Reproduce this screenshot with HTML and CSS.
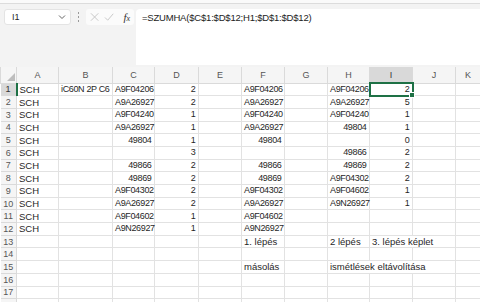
FILE: index.html
```html
<!DOCTYPE html>
<html lang="hu">
<head>
    <meta charset="UTF-8">
    <meta name="viewport" content="width=device-width, initial-scale=1.0">
    <title>Munkafüzet</title>
    <link rel="stylesheet" href="styles.css">
</head>
<body>
    <div class="ribbon-edge"></div>
    <div class="formula-bar">
        <div class="name-box">
            <span>I1</span>
            <svg width="8" height="6" viewBox="0 0 8 6"><path d="M1 1.5 L4 4.5 L7 1.5" fill="none" stroke="#666" stroke-width="1"/></svg>
        </div>
        <div class="grip"><i></i><i></i><i></i></div>
        <div class="fx-buttons">
            <svg width="10" height="10" viewBox="0 0 10 10"><path d="M1 1 L9 9 M9 1 L1 9" stroke="#c4c4c4" stroke-width="1"/></svg>
            <svg width="11" height="10" viewBox="0 0 11 10"><path d="M1 5.5 L4 8.5 L10 1.5" fill="none" stroke="#c4c4c4" stroke-width="1"/></svg>
            <span class="fx">f<small>x</small></span>
        </div>
        <div class="formula-input">=SZUMHA($C$1:$D$12;H1;$D$1:$D$12)</div>
    </div>

    <table class="sheet" id="sheet">
        <colgroup>
            <col style="width:16px"><col style="width:42px"><col style="width:54px"><col style="width:42px">
            <col style="width:44px"><col style="width:43px"><col style="width:43px"><col style="width:43px">
            <col style="width:42px"><col style="width:43px"><col style="width:43px"><col style="width:25px">
        </colgroup>
    </table>

    <script>
        const columns = ['A', 'B', 'C', 'D', 'E', 'F', 'G', 'H', 'I', 'J', 'K'];

        // egy sor = A..K oszlopok, szám jobbra, szöveg balra igazítva
        const rows = [
            ['SCH', 'iC60N 2P C6', 'A9F04206', 2, '', 'A9F04206', '', 'A9F04206', 2],
            ['SCH', '', 'A9A26927', 2, '', 'A9A26927', '', 'A9A26927', 5],
            ['SCH', '', 'A9F04240', 1, '', 'A9F04240', '', 'A9F04240', 1],
            ['SCH', '', 'A9A26927', 1, '', 'A9A26927', '', 49804, 1],
            ['SCH', '', 49804, 1, '', 49804, '', '', 0],
            ['SCH', '', '', 3, '', '', '', 49866, 2],
            ['SCH', '', 49866, 2, '', 49866, '', 49869, 2],
            ['SCH', '', 49869, 2, '', 49869, '', 'A9F04302', 2],
            ['SCH', '', 'A9F04302', 2, '', 'A9F04302', '', 'A9F04602', 1],
            ['SCH', '', 'A9A26927', 2, '', 'A9A26927', '', 'A9N26927', 1],
            ['SCH', '', 'A9F04602', 1, '', 'A9F04602'],
            ['SCH', '', 'A9N26927', 1, '', 'A9N26927'],
            ['', '', '', '', '', '1. lépés', '', '2 lépés', { text: '3. lépés képlet', span: 2 }],
            [],
            ['', '', '', '', '', 'másolás', '', { text: 'ismétlések eltávolítása', span: 3 }],
            [],
            [],
            []
        ];

        const sheet = document.getElementById('sheet');

        const head = document.createElement('tr');
        head.className = 'col-head';
        head.innerHTML = '<th class="corner"><svg width="8" height="8" viewBox="0 0 8 8"><path d="M8 0 L8 8 L0 8 Z" fill="#bdbdbd"/></svg></th>' +
            columns.map(c => `<th class="${c === 'I' ? 'active' : ''}">${c}</th>`).join('');
        sheet.appendChild(head);

        rows.forEach((row, r) => {
            const tr = document.createElement('tr');
            let html = `<th class="row-head${r === 0 ? ' active' : ''}">${r + 1}</th>`;
            let col = 0;
            while (col < columns.length) {
                let value = row[col] === undefined ? '' : row[col];
                let span = 1;
                if (typeof value === 'object') {
                    span = value.span;
                    value = value.text;
                }
                let cls = typeof value === 'number' ? 'num' : '';
                // cikkszámok: szűkebb betűköz, mint a Calibri számjegyei
                if (/^[A-Za-z0-9 ]+$/.test(value) && /[0-9]/.test(value)) cls += ' code';
                if (r === 0 && columns[col] === 'I') cls += ' selected';
                html += `<td class="${cls.trim()}"${span > 1 ? ` colspan="${span}"` : ''}>${value}</td>`;
                col += span;
            }
            tr.innerHTML = html;
            sheet.appendChild(tr);
        });
    </script>
</body>
</html>
```

FILE: styles.css
```css
body {
    margin: 0;
    width: 480px;
    height: 302px;
    overflow: hidden;
    background-color: #f3f3f3;
    font-family: "Liberation Sans", Arial, sans-serif;
    color: #1f1f1f;
}
.ribbon-edge {
    height: 3px;
    background-color: #fafafa;
    border-bottom: 1px solid #dcdcdc;
}
.formula-bar {
    display: flex;
    align-items: flex-start;
    height: 61px;
    padding: 5px 0 0 4px;
    box-sizing: border-box;
}
.name-box {
    display: flex;
    align-items: center;
    justify-content: space-between;
    width: 67px;
    height: 16px;
    box-sizing: border-box;
    padding: 0 4px 0 7px;
    background-color: white;
    border: 1px solid #e4e4e4;
    border-radius: 3px;
    font-size: 9px;
}
.grip {
    display: flex;
    flex-direction: column;
    gap: 2px;
    width: 1px;
    margin: 3px 7px 0 7px;
}
.grip i {
    width: 1px;
    height: 2px;
    background-color: #9a9a9a;
}
.fx-buttons {
    display: flex;
    align-items: center;
    gap: 5px;
    width: 48px;
    height: 16px;
    box-sizing: border-box;
    padding: 0 4px 0 4px;
    background-color: #fbfbfb;
    border-radius: 3px;
}
.fx {
    margin-left: 4px;
    font-family: "Liberation Serif", "Times New Roman", serif;
    font-style: italic;
    font-size: 11px;
    color: #333;
}
.fx small {
    font-size: 8px;
}
.formula-input {
    flex: 1;
    height: 56px;
    margin-left: 2px;
    padding: 3px 6px;
    box-sizing: border-box;
    background-color: white;
    border-top-left-radius: 4px;
    font-size: 9.5px;
    letter-spacing: -0.2px;
    color: #222;
}
.sheet {
    margin-top: 2px;
    table-layout: fixed;
    border-collapse: collapse;
    width: 480px;
    background-color: white;
    font-size: 9.5px;
}
.sheet tr {
    height: 12.7px;
}
.sheet .col-head {
    height: 16px;
}
.sheet th {
    padding: 0;
    font-weight: normal;
    color: #555;
    background-color: #f5f5f5;
    border: 1px solid #dadada;
}
.sheet .col-head th {
    font-size: 9px;
    border-top: none;
}
.sheet th.corner {
    text-align: right;
    vertical-align: bottom;
    line-height: 0;
}
.sheet th.corner svg {
    margin: 0 1px 2px 0;
}
.sheet .col-head th.active {
    background-color: #d9d9d9;
    border-bottom: 2px solid #1e7145;
    color: #333;
}
.sheet th.row-head {
    font-size: 9px;
    text-align: center;
    border-left: none;
}
.sheet th.row-head.active {
    background-color: #d9d9d9;
    border-right: 2px solid #1e7145;
    color: #333;
}
.sheet td {
    padding: 0 2px;
    line-height: 11px;
    white-space: nowrap;
    overflow: visible;
    border: 1px solid #e2e2e2;
}
.sheet td.code {
    font-size: 9px;
    letter-spacing: -0.35px;
}
.sheet td.num {
    text-align: right;
    padding-right: 2.5px;
}
.sheet td.selected {
    position: relative;
    outline: 2px solid #1e7145;
    outline-offset: -1px;
}
.sheet td.selected::after {
    content: "";
    position: absolute;
    right: -3px;
    bottom: -3px;
    width: 4px;
    height: 4px;
    background-color: #1e7145;
    border: 1px solid white;
}
```
